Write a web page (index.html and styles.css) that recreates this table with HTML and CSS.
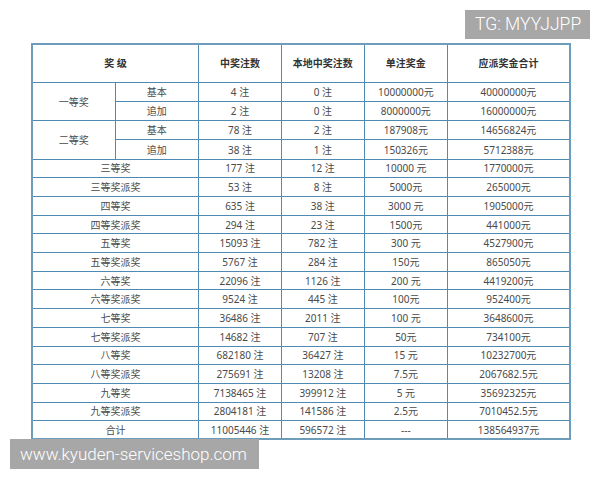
FILE: index.html
```html
<!DOCTYPE html>
<html lang="zh">
<head>
<meta charset="utf-8">
<link rel="stylesheet" href="styles.css">
</head>
<body>
<div class="page">
  <table class="prize">
    <colgroup>
      <col class="c1"><col class="c2"><col class="c3"><col class="c4"><col class="c5"><col class="c6">
    </colgroup>
    <thead>
      <tr class="head"><th colspan="2">奖 级</th><th>中奖注数</th><th>本地中奖注数</th><th>单注奖金</th><th>应派奖金合计</th></tr>
    </thead>
    <tbody>
      <tr class="tall"><td rowspan="2">一等奖</td><td>基本</td><td>4 注</td><td>0 注</td><td>10000000元</td><td>40000000元</td></tr>
      <tr class="tall"><td>追加</td><td>2 注</td><td>0 注</td><td>8000000元</td><td>16000000元</td></tr>
      <tr class="tall"><td rowspan="2">二等奖</td><td>基本</td><td>78 注</td><td>2 注</td><td>187908元</td><td>14656824元</td></tr>
      <tr class="tall"><td>追加</td><td>38 注</td><td>1 注</td><td>150326元</td><td>5712388元</td></tr>
      <tr><td colspan="2">三等奖</td><td>177 注</td><td>12 注</td><td>10000 元</td><td>1770000元</td></tr>
      <tr><td colspan="2">三等奖派奖</td><td>53 注</td><td>8 注</td><td>5000元</td><td>265000元</td></tr>
      <tr><td colspan="2">四等奖</td><td>635 注</td><td>38 注</td><td>3000 元</td><td>1905000元</td></tr>
      <tr><td colspan="2">四等奖派奖</td><td>294 注</td><td>23 注</td><td>1500元</td><td>441000元</td></tr>
      <tr><td colspan="2">五等奖</td><td>15093 注</td><td>782 注</td><td>300 元</td><td>4527900元</td></tr>
      <tr><td colspan="2">五等奖派奖</td><td>5767 注</td><td>284 注</td><td>150元</td><td>865050元</td></tr>
      <tr><td colspan="2">六等奖</td><td>22096 注</td><td>1126 注</td><td>200 元</td><td>4419200元</td></tr>
      <tr><td colspan="2">六等奖派奖</td><td>9524 注</td><td>445 注</td><td>100元</td><td>952400元</td></tr>
      <tr><td colspan="2">七等奖</td><td>36486 注</td><td>2011 注</td><td>100 元</td><td>3648600元</td></tr>
      <tr><td colspan="2">七等奖派奖</td><td>14682 注</td><td>707 注</td><td>50元</td><td>734100元</td></tr>
      <tr><td colspan="2">八等奖</td><td>682180 注</td><td>36427 注</td><td>15 元</td><td>10232700元</td></tr>
      <tr><td colspan="2">八等奖派奖</td><td>275691 注</td><td>13208 注</td><td>7.5元</td><td>2067682.5元</td></tr>
      <tr><td colspan="2">九等奖</td><td>7138465 注</td><td>399912 注</td><td>5 元</td><td>35692325元</td></tr>
      <tr><td colspan="2">九等奖派奖</td><td>2804181 注</td><td>141586 注</td><td>2.5元</td><td>7010452.5元</td></tr>
      <tr><td colspan="2">合计</td><td>11005446 注</td><td>596572 注</td><td>---</td><td>138564937元</td></tr>
    </tbody>
  </table>
  <div class="mark mark-tg">TG: MYYJJPP</div>
  <div class="mark mark-site">www.kyuden-serviceshop.com</div>
</div>
</body>
</html>
```

FILE: styles.css
```css
html, body {
  margin: 0;
  padding: 0;
  background: #ffffff;
}

.page {
  position: relative;
  width: 600px;
  height: 480px;
  box-sizing: border-box;
  padding: 43px 0 0 31px;
  font-family: "Noto Sans", "Noto Sans CJK SC", sans-serif;
}

.prize {
  border-collapse: collapse;
  table-layout: fixed;
  width: 538px;
  border: 2px solid #6e9cbb;
  color: #4a4a4a;
  font-size: 10px;
}

.c1 { width: 83px; }
.c2 { width: 83.5px; }
.c3 { width: 83px; }
.c4 { width: 82.7px; }
.c5 { width: 83.3px; }
.c6 { width: 122.5px; }

.prize th,
.prize td {
  border: 1px solid #4f8ab3;
  padding: 0;
  text-align: center;
  vertical-align: middle;
  line-height: 12px;
  white-space: nowrap;
}

.prize th {
  font-weight: bold;
  color: #333333;
}

.prize tr { height: 18.7px; }
.prize tr.tall { height: 19.2px; }
.prize tr.head { height: 38.4px; }

.mark {
  position: absolute;
  background: #a7a7a7;
  color: #ffffff;
  font-family: Roboto, "Liberation Sans", Arial, sans-serif;
  font-weight: 300;
  white-space: nowrap;
  box-sizing: border-box;
}

.mark-tg {
  left: 465px;
  top: 10px;
  width: 125px;
  height: 29px;
  font-size: 17.5px;
  line-height: 29px;
  padding-left: 10px;
}

.mark-site {
  left: 10px;
  top: 439px;
  width: 249px;
  height: 30px;
  font-size: 17px;
  line-height: 30px;
  padding-left: 10px;
}
```
